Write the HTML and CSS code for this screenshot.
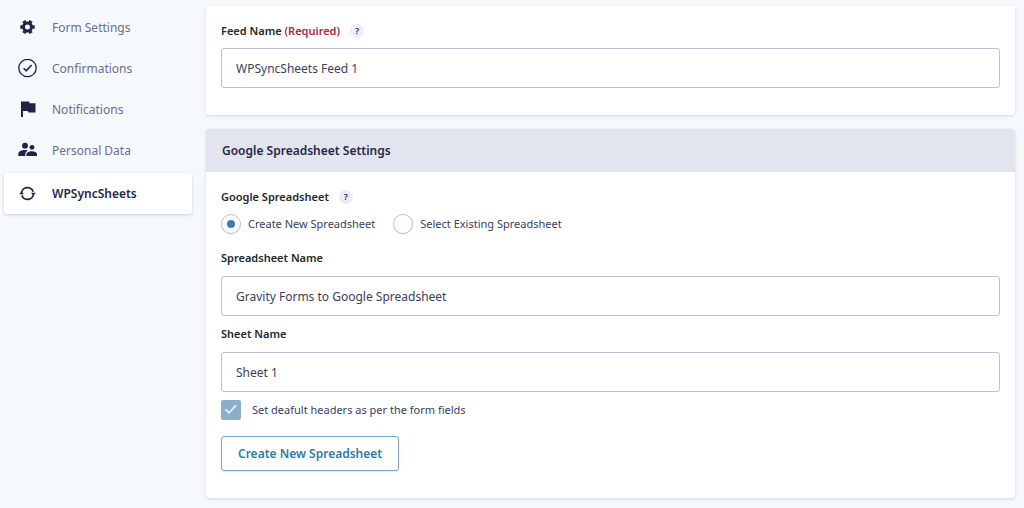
FILE: index.html
```html
<!DOCTYPE html>
<html lang="en">
<head>
<meta charset="utf-8">
<meta name="viewport" content="width=device-width, initial-scale=1">
<title>Form Settings – WPSyncSheets</title>
<link rel="stylesheet" href="styles.css">
</head>
<body>
<div class="layout">
  <nav class="sidebar" aria-label="Form settings">
    <a class="nav-item" href="#settings">
      <svg class="nav-icon" viewBox="0 0 20 20" aria-hidden="true"><g fill="none" stroke="currentColor"><circle cx="9.500" cy="9" r="4" stroke-width="3"/><path stroke-width="3.600" stroke-linejoin="round" d="M4.500 9H2.300M14.500 9h2.200M7 4.700L5.900 2.800M12 4.700l1.100-1.900M7 13.300l-1.100 1.900M12 13.300l1.100 1.900"/></g></svg>
      <span>Form Settings</span>
    </a>
    <a class="nav-item" href="#confirmations">
      <svg class="nav-icon" viewBox="0 0 20 20" aria-hidden="true"><g fill="none" stroke="currentColor" stroke-width="1.300"><circle cx="9.500" cy="9" r="8.700"/><path stroke-width="1.600" d="M5.600 9.200l2.600 2.600L13.600 6"/></g></svg>
      <span>Confirmations</span>
    </a>
    <a class="nav-item" href="#notifications">
      <svg class="nav-icon" viewBox="0 0 20 20" aria-hidden="true"><path fill="currentColor" d="M3 1.500h8l.8 1.800h5.700v9.200H10.500L9.700 11H5v6H3z"/></svg>
      <span>Notifications</span>
    </a>
    <a class="nav-item" href="#personal-data">
      <svg class="nav-icon" viewBox="0 0 20 20" aria-hidden="true"><g fill="currentColor"><circle cx="7" cy="4.700" r="2.900"/><circle cx="14" cy="6.300" r="2.400"/><path d="M.3 15v-2c0-2.700 3.500-3.900 6.700-3.900 1 0 2 .1 2.900.4-1.800 1-2.600 2.300-2.600 4V15z"/><path d="M8.500 15v-1.700c0-2.200 2.500-3.100 5.200-3.100s5.300.9 5.300 3.100V15z"/></g></svg>
      <span>Personal Data</span>
    </a>
    <a class="nav-item nav-item-active" href="#wpsyncsheets" aria-current="page">
      <svg class="nav-icon" viewBox="0 0 20 20" aria-hidden="true"><g fill="none" stroke="currentColor" stroke-width="1.700"><path d="M3.500 9.500a6 6 0 0 1 11.700-1.800"/><path d="M15.500 9.500A6 6 0 0 1 3.800 11.300"/></g><path fill="currentColor" d="M1.200 10.300l2.300-2.900 2.600 2.900zM12.900 8.700h4.900l-2.300 2.900z"/></svg>
      <span>WPSyncSheets</span>
    </a>
  </nav>

  <main class="content">
    <form class="panels">
      <section class="card">
        <div class="card-body">
          <div class="field-label">
            <label for="feed-name">Feed Name <span class="required">(Required)</span></label>
            <button class="help" type="button" aria-label="Feed name help">?</button>
          </div>
          <input class="text-input" id="feed-name" type="text" value="WPSyncSheets Feed 1">
        </div>
      </section>

      <section class="card">
        <h2 class="card-header">Google Spreadsheet Settings</h2>
        <div class="card-body">
          <div class="field-label">
            <span id="source-label">Google Spreadsheet</span>
            <button class="help" type="button" aria-label="Google Spreadsheet help">?</button>
          </div>
          <div class="radios" role="radiogroup" aria-labelledby="source-label">
            <label class="choice"><input class="radio" type="radio" name="source" checked>Create New Spreadsheet</label>
            <label class="choice"><input class="radio" type="radio" name="source">Select Existing Spreadsheet</label>
          </div>
          <div class="field">
            <div class="field-label"><label for="spreadsheet-name">Spreadsheet Name</label></div>
            <input class="text-input" id="spreadsheet-name" type="text" value="Gravity Forms to Google Spreadsheet">
          </div>
          <div class="field">
            <div class="field-label"><label for="sheet-name">Sheet Name</label></div>
            <input class="text-input" id="sheet-name" type="text" value="Sheet 1">
          </div>
          <div class="check-row">
            <span class="check-box">
              <input class="checkbox" id="headers" type="checkbox" checked>
              <svg class="check-mark" viewBox="0 0 20 20" aria-hidden="true"><path fill="none" stroke="currentColor" stroke-width="1.800" d="M4.500 9.300l3.500 3.500 7-7.500"/></svg>
            </span>
            <label for="headers">Set deafult headers as per the form fields</label>
          </div>
          <button class="create" type="button">Create New Spreadsheet</button>
        </div>
      </section>
    </form>
  </main>
</div>
</body>
</html>
```

FILE: styles.css
```css
* {
  box-sizing: border-box;
}

body {
  margin: 0;
  background: #f5f9fc;
  color: #242748;
  font: 12px/18px "Segoe UI", "Noto Sans", "Open Sans", sans-serif;
}

button,
input {
  margin: 0;
  font: inherit;
  color: inherit;
}

.layout {
  display: flex;
  gap: 14px;
  padding: 6px 9px 10px 4px;
}

.sidebar {
  flex: 0 0 188px;
  padding-top: 1px;
}

.nav-item {
  display: flex;
  align-items: center;
  gap: 14px;
  height: 41px;
  padding: 0 14px;
  color: #6b7087;
  font-size: 12px;
  text-decoration: none;
}

.nav-icon {
  width: 20px;
  height: 20px;
  color: #1f2346;
}

.nav-item-active {
  margin-top: 2px;
  border-radius: 3px;
  background: #fff;
  box-shadow: 0 1px 3px rgba(35, 40, 90, 0.2);
  color: #242748;
  font-weight: 600;
}

.content {
  flex: 1;
  min-width: 0;
}

.panels {
  display: grid;
  gap: 14px;
}

.card {
  border-radius: 3px;
  background: #fff;
  box-shadow: 0 1px 3px rgba(35, 40, 90, 0.16);
}

.card-header {
  margin: 0;
  padding: 13px 16px 12px;
  border-radius: 3px 3px 0 0;
  background: #e2e5ee;
  font-size: 12px;
  font-weight: 600;
  line-height: 18px;
}

.card-body {
  padding: 16px 15px 27px;
}

.field {
  margin-top: 9px;
}

.radios + .field {
  margin-top: 15px;
}

.field-label {
  display: flex;
  align-items: center;
  gap: 10px;
  height: 18px;
  color: #23282d;
  font-size: 11px;
  font-weight: 600;
}

.required {
  color: #b5273a;
}

.help {
  width: 14px;
  height: 14px;
  padding: 0;
  border: 0;
  border-radius: 50%;
  background: #ecedf8;
  color: #242748;
  font-size: 9px;
  font-weight: 600;
  line-height: 14px;
}

.text-input {
  display: block;
  width: 100%;
  height: 40px;
  margin-top: 8px;
  padding: 1px 14px 0;
  border: 1px solid #bfbfd4;
  border-radius: 3px;
  background: #fff;
  color: #3c4060;
  font-size: 12px;
}

.field .text-input {
  margin-top: 9px;
}

.radios {
  display: flex;
  gap: 18px;
  margin-top: 8px;
}

.choice {
  display: flex;
  align-items: center;
  gap: 7px;
  color: #3c4060;
  font-size: 11px;
}

.radio {
  appearance: none;
  display: grid;
  place-items: center;
  width: 20px;
  height: 20px;
  border: 1px solid #bdbdd3;
  border-radius: 50%;
  background: #fff;
  box-shadow: 0 1px 1px rgba(35, 40, 90, 0.08);
}

.radio:checked::before {
  width: 8px;
  height: 8px;
  border-radius: 50%;
  background: #3e7da6;
  content: "";
}

.check-row {
  display: flex;
  align-items: center;
  gap: 11px;
  margin-top: 8px;
  color: #3c4060;
  font-size: 11px;
}

.check-box {
  display: grid;
  width: 20px;
  height: 20px;
}

.checkbox,
.check-mark {
  grid-area: 1 / 1;
  width: 20px;
  height: 20px;
}

.checkbox {
  appearance: none;
  border-radius: 2px;
  background: #8bafca;
}

.check-mark {
  z-index: 1;
  color: #e6f0f6;
  pointer-events: none;
}

.create {
  height: 35px;
  margin-top: 16px;
  padding: 0 16px;
  border: 1px solid #7ba7c3;
  border-radius: 3px;
  background: #fff;
  box-shadow: 0 1px 2px rgba(35, 40, 90, 0.1);
  color: #2f7ba5;
  font-size: 12px;
  font-weight: 600;
}
```
